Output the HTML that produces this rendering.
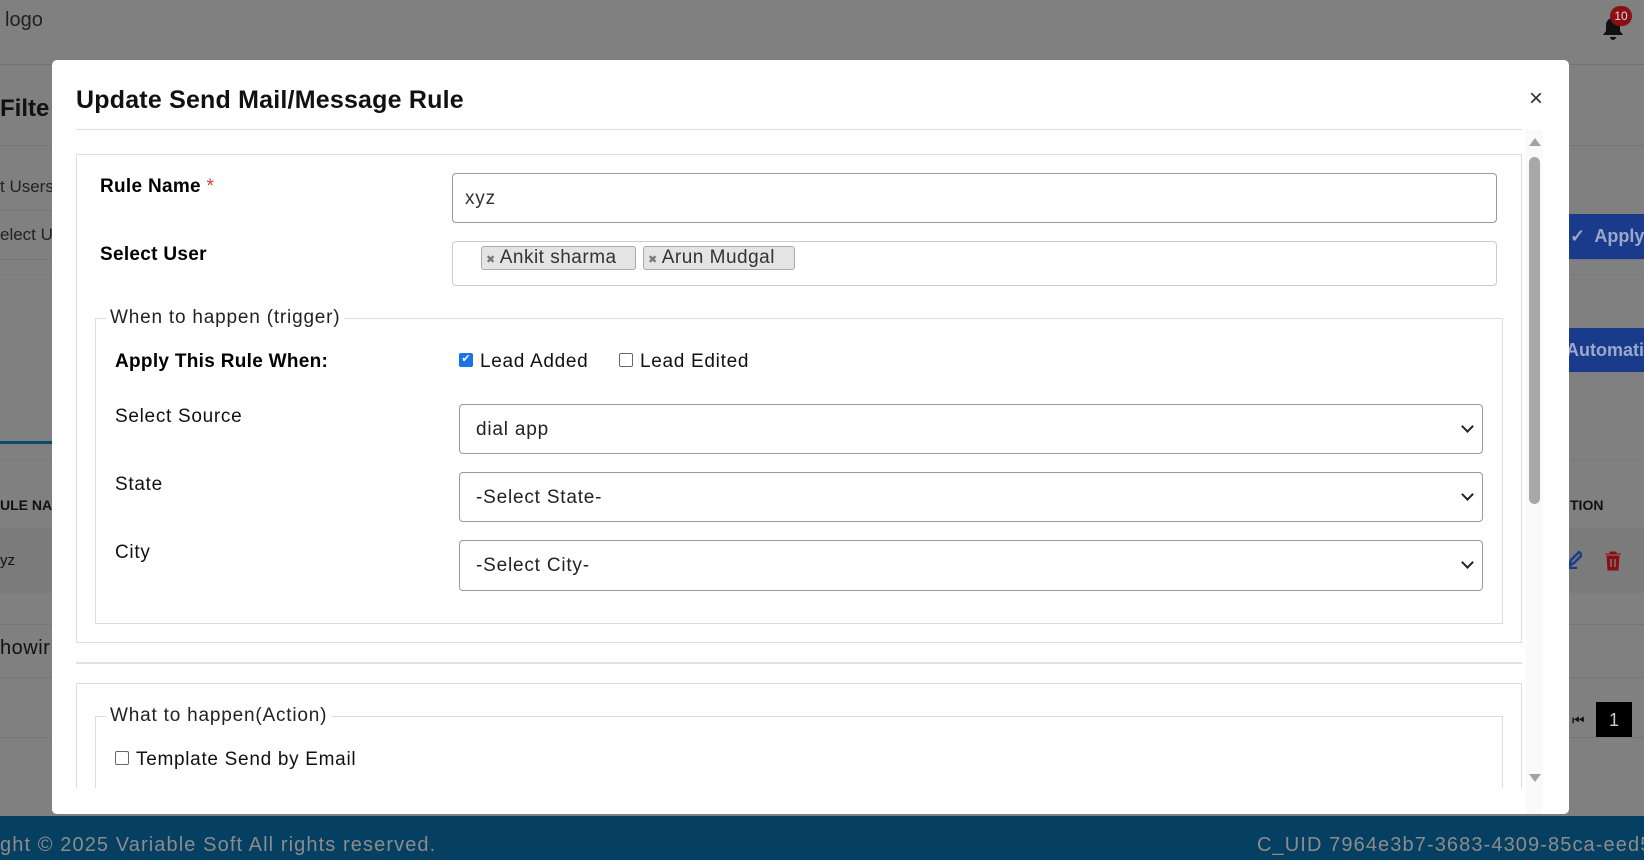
<!DOCTYPE html>
<html><head><meta charset="utf-8"><style>
*{box-sizing:border-box;margin:0;padding:0}
html,body{width:1644px;height:860px;overflow:hidden}
body{background:#808080;font-family:"Liberation Sans",sans-serif;position:relative;color:#000}
.a{position:absolute;white-space:nowrap}
.line{position:absolute;height:1px;background:#777}
.modal{position:absolute;left:52px;top:60px;width:1517px;height:754px;background:#fff;border-radius:5px;overflow:hidden}
.m{position:absolute;white-space:nowrap}
.box{position:absolute;border:1px solid #bbb;border-radius:4px;background:#fff}
.lbl{font-size:19px;color:#111;letter-spacing:0.7px}
.b{font-weight:bold;color:#000;letter-spacing:0.3px}
.chip{position:absolute;top:4px;height:24px;border:1px solid #aaa;border-radius:3px;background:#e4e4e4;font-size:19px;padding:0 6px 0 4px;line-height:22px;color:#333;letter-spacing:0.5px}
.chip span{font-size:11px;color:#777;margin-right:4px}
.chev{position:absolute;right:10px;top:17px;width:9px;height:9px;border-right:2px solid #222;border-bottom:2px solid #222;transform:rotate(45deg)}
.cb{position:absolute;width:14px;height:14px;border:1.5px solid #666;border-radius:2px;background:#fff}
.v{font-size:19px;color:#222;letter-spacing:0.8px}
</style></head><body>
<div class="a" style="left:5px;top:9px;font-size:20px;color:#222">logo</div>
<div class="line" style="left:0;top:64px;width:1644px;background:#737373"></div>
<svg class="a" style="left:1601px;top:16px" width="24" height="26" viewBox="0 0 24 26"><path d="M12 2c-4 0-7 3-7 7v6l-3 4h20l-3-4V9c0-4-3-7-7-7z M9 21a3 3 0 0 0 6 0z" fill="#111"/></svg>
<div class="a" style="left:1610px;top:6px;width:22px;height:20px;border-radius:10px;background:#8a0f14;color:#ddd;font-size:12px;text-align:center;line-height:20px">10</div>
<div class="a" style="left:0;top:95px;font-size:24px;font-weight:bold;color:#111">Filte</div>
<div class="line" style="left:0;top:145px;width:1644px"></div>
<div class="a" style="left:0;top:177px;font-size:17px;color:#222">t Users</div>
<div class="line" style="left:0;top:210px;width:60px"></div>
<div class="a" style="left:0;top:225px;font-size:17px;color:#222">elect Us</div>
<div class="line" style="left:0;top:259px;width:1644px"></div>
<div class="a" style="left:0;top:274px;width:1644px;height:1px;background:#7a7a7a"></div>
<div class="a" style="left:1560px;top:214px;width:84px;height:45px;background:#1a3b8c;color:#9aa8c9;font-size:18px;font-weight:bold;line-height:45px;padding-left:10px">✓&nbsp; Apply</div>
<div class="a" style="left:1560px;top:328px;width:84px;height:44px;background:#1a3b8c;color:#9aa8c9;font-size:18px;font-weight:bold;line-height:44px;padding-left:6px">Automati</div>
<div class="a" style="left:0;top:441px;width:52px;height:3px;background:#0e4a6e"></div>
<div class="line" style="left:0;top:460px;width:1644px;background:#7a7a7a"></div>
<div class="a" style="left:0;top:497px;font-size:14px;font-weight:bold;color:#111">ULE NAM</div>
<div class="a" style="left:1570px;top:497px;font-size:14px;font-weight:bold;color:#111">TION</div>
<div class="line" style="left:0;top:528px;width:1644px"></div>
<div class="a" style="left:0;top:528px;width:1644px;height:65px;background:#7b7b7b"></div>
<div class="a" style="left:0;top:552px;font-size:15px;color:#111">yz</div>
<svg class="a" style="left:1566px;top:551px" width="16" height="18"><path d="M3 15l2-6 8-8 3 3-8 8z M1 17h10" stroke="#1c3d8a" stroke-width="2.5" fill="none"/></svg>
<svg class="a" style="left:1604px;top:551px" width="18" height="20"><path d="M1 3h16M6 3V1h6v2M3 5h12l-1 14H4z" fill="#8a0f14" stroke="#8a0f14"/><path d="M7 8v8M11 8v8" stroke="#7b7b7b" stroke-width="1.5"/></svg>
<div class="line" style="left:0;top:624px;width:1644px"></div>
<div class="a" style="left:0;top:637px;font-size:20px;color:#111;letter-spacing:0.5px">howir</div>
<div class="line" style="left:0;top:677px;width:1644px"></div>
<div class="a" style="left:1572px;top:712px;font-size:14px;color:#111">⏮</div>
<div class="a" style="left:1596px;top:702px;width:36px;height:36px;background:#000;color:#ccc;font-size:18px;text-align:center;line-height:36px">1</div>
<div class="line" style="left:0;top:737px;width:1644px"></div>
<div class="a" style="left:0;top:816px;width:1644px;height:44px;background:#053f61"></div>
<div class="a" style="left:0;top:834px;font-size:20px;color:#8c8c8c;letter-spacing:1.1px">ght © 2025 Variable Soft All rights reserved.</div>
<div class="a" style="left:1257px;top:834px;font-size:20px;color:#8c8c8c;letter-spacing:1.1px">C_UID 7964e3b7-3683-4309-85ca-eed5</div>

<div class="modal">
<div class="m" style="left:24px;top:26px;font-size:25px;font-weight:bold;color:#111;letter-spacing:0.2px">Update Send Mail/Message Rule</div>
<div class="m" style="left:1477px;top:25px;font-size:24px;color:#333">×</div>
<div class="m" style="left:24px;top:69px;width:1446px;height:1px;background:#ddd"></div>
<div class="m" style="left:1474px;top:70px;width:17px;height:718px;background:#fafafa"></div>
<div class="m" style="left:1477px;top:78px;width:0;height:0;border-left:6px solid transparent;border-right:6px solid transparent;border-bottom:8px solid #a3a3a3"></div>
<div class="m" style="left:1477px;top:97px;width:11px;height:347px;border-radius:6px;background:#a8a8a8"></div>
<div class="m" style="left:1477px;top:714px;width:0;height:0;border-left:6px solid transparent;border-right:6px solid transparent;border-top:8px solid #a3a3a3"></div>

<div class="m" style="left:24px;top:94px;width:1446px;height:489px;border:1px solid #ddd"></div>
<div class="m lbl b" style="left:48px;top:116px">Rule Name <span style="color:#e53935;font-weight:normal">*</span></div>
<div class="box" style="left:400px;top:113px;width:1045px;height:50px;border-color:#999"><div class="m v" style="left:12px;top:14px;color:#333">xyz</div></div>
<div class="m lbl b" style="left:48px;top:184px">Select User</div>
<div class="box" style="left:400px;top:181px;width:1045px;height:45px;border-color:#ccc">
<div class="chip" style="left:28px;width:155px"><span>✖</span>Ankit sharma</div>
<div class="chip" style="left:190px;width:152px"><span>✖</span>Arun Mudgal</div></div>
<div class="m" style="left:43px;top:258px;width:1408px;height:306px;border:1px solid #ddd"></div>
<div class="m v" style="left:54px;top:247px;background:#fff;padding:0 4px">When to happen (trigger)</div>
<div class="m lbl b" style="left:63px;top:291px">Apply This Rule When:</div>
<div class="cb" style="left:407px;top:293px;background:#1a73e8;border-color:#1a73e8;color:#fff;font-size:11px;line-height:11px;text-align:center">✔</div>
<div class="m lbl" style="left:428px;top:291px">Lead Added</div>
<div class="cb" style="left:567px;top:293px"></div>
<div class="m lbl" style="left:588px;top:291px">Lead Edited</div>
<div class="m lbl" style="left:63px;top:346px">Select Source</div>
<div class="box" style="left:407px;top:344px;width:1024px;height:50px;border-color:#999"><div class="m v" style="left:16px;top:14px">dial app</div><div class="chev"></div></div>
<div class="m lbl" style="left:63px;top:414px">State</div>
<div class="box" style="left:407px;top:412px;width:1024px;height:50px;border-color:#999"><div class="m v" style="left:16px;top:14px">-Select State-</div><div class="chev"></div></div>
<div class="m lbl" style="left:63px;top:482px">City</div>
<div class="box" style="left:407px;top:480px;width:1024px;height:51px;border-color:#999"><div class="m v" style="left:16px;top:14px">-Select City-</div><div class="chev"></div></div>
<div class="m" style="left:24px;top:602px;width:1446px;height:2px;background:#e2e2e2"></div>
<div class="m" style="left:24px;top:623px;width:1446px;height:200px;border:1px solid #ddd"></div>
<div class="m" style="left:43px;top:656px;width:1408px;height:200px;border:1px solid #ddd"></div>
<div class="m v" style="left:54px;top:645px;background:#fff;padding:0 4px">What to happen(Action)</div>
<div class="cb" style="left:63px;top:691px"></div>
<div class="m lbl" style="left:84px;top:689px">Template Send by Email</div>
<div class="m" style="left:0;top:728px;width:1474px;height:26px;background:#fff"></div>
</div>
</body></html>
